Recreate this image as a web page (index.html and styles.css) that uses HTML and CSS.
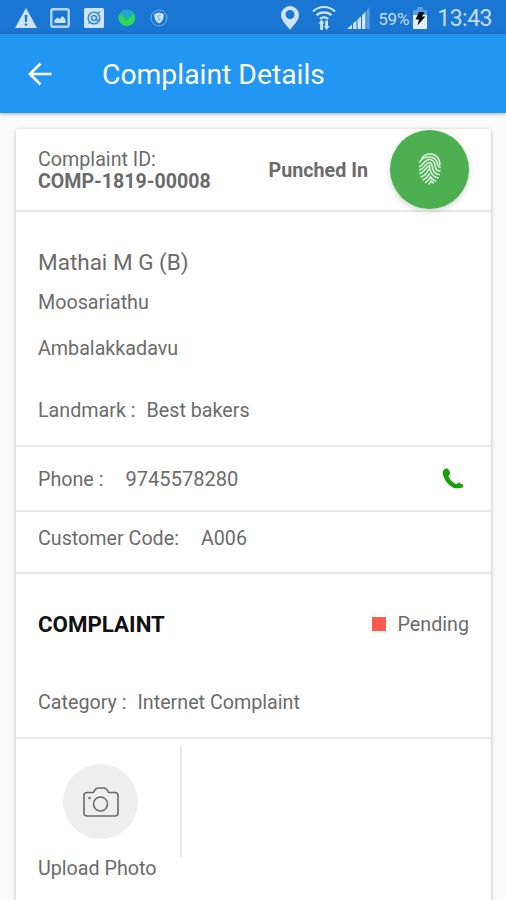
FILE: index.html
```html
<!DOCTYPE html>
<html lang="en">
<head>
    <meta charset="utf-8">
    <meta content="width=device-width,initial-scale=1.0" name="viewport">
    <title>Complaint Details</title>
    <link rel="stylesheet" href="styles.css">
</head>
<body>
<!-- status bar -->
<div class="status-bar">
    <div class="status-left">
        <svg width="24" height="22" viewBox="0 0 24 22"><path fill="#cfe4fb" d="M12 1L23 21H1z"/><path fill="#1976d2" d="M10.600 8h2.800l-.4 7h-2zM10.800 16.500h2.400v2.300h-2.400z"/></svg>
        <svg width="20" height="20" viewBox="0 0 20 20"><rect x="1.300" y="1.300" width="17.400" height="17.400" rx="1.500" fill="none" stroke="#b5d5f7" stroke-width="2.400"/><path fill="#cfe4fb" d="M4.500 15v-3l3-2.500 2 1.500 3-3 3 3.500V15z"/></svg>
        <svg width="20" height="20" viewBox="0 0 20 20"><rect width="20" height="20" rx="1.500" fill="#cfe4fb"/><g fill="none" stroke="#3b8fb5" stroke-width="1.500"><circle cx="10" cy="10" r="5.800"/><circle cx="10" cy="10" r="2.500"/><path d="M12.500 8v3c0 2 3 1.500 3.300-.5M4.500 15.500l2-1.500M14 5l2-1.500"/></g></svg>
        <svg width="18" height="18" viewBox="0 0 18 18"><circle cx="9" cy="9" r="8.500" fill="#22b58c"/><path fill="#1da5d8" d="M3 3c3-3 9-3 12 0l-5 6-4-2z"/><path fill="#2fd85c" d="M1 6l4 1 3 5 8-7c2 3 1 8-3 10.500-3 2-8 1.500-10-1.500C1 12 0 9 1 6z"/></svg>
        <svg width="18" height="18" viewBox="0 0 18 18"><circle cx="9" cy="9" r="8" fill="none" stroke="#6caeee"/><path fill="#cfe4fb" d="M9 3.500l4.700 1.400c.2 4-1 7.500-4.700 9.600-3.700-2.100-4.900-5.600-4.700-9.600z"/><path fill="none" stroke="#5a9fe5" d="M10.500 6.500c-3-.6-3 2-1.500 2.300s1.500 2.600-1.200 2.200"/></svg>
    </div>
    <div class="status-right">
        <svg width="18" height="24" viewBox="0 0 18 24"><path fill="#cfe4fb" fill-rule="evenodd" d="M9 0a9 9 0 0 0-9 9c0 6 6 10 9 15 3-5 9-9 9-15a9 9 0 0 0-9-9zm0 4a4.500 4.500 0 1 1 0 9 4.500 4.500 0 0 1 0-9z"/></svg>
        <svg class="wifi" width="24" height="26" viewBox="0 0 24 26"><g fill="none" stroke="#cfe4fb" stroke-width="2.200"><path d="M1 6.500c6-6 16-6 22 0M4.500 10.300c4-4 11-4 15 0M8 14c2-2.200 6-2.200 8 0"/></g><path fill="#cfe4fb" d="M9.500 14.500l3 4H11V25H8.200v-6.500H6.500zM13.300 15.500H16V21h1.700l-3 4-3-4h1.600z"/></svg>
        <svg class="signal" width="23" height="22" viewBox="0 0 23 22"><path fill="#cfe4fb" d="M0 22l5-4.500V22zM6 16.500l3.500-3V22H6zM10.500 12.500l3.500-3.300V22h-3.500zM15 8.200l3.500-3.400V22H15z"/><path fill="#5a9fe5" d="M19.500 4L22.500 0v22h-3z"/></svg>
        <span class="percent">59%</span>
        <svg class="battery" width="14" height="22" viewBox="0 0 14 22"><path fill="#5a9fe5" d="M4 0h6v3h4v6H0V3h4z"/><path fill="#e4f0fc" d="M0 8h14v14H0z"/><path fill="#111" d="M6 5h5.500L9 9.500h3.500l-8 9 1.500-6H2.500z"/></svg>
        <span class="clock">13:43</span>
    </div>
</div>
<!-- header -->
<header class="app-bar">
    <svg class="back" width="24" height="24" viewBox="0 0 24 24"><path fill="none" stroke="#fff" stroke-width="2.700" d="M23.500 12H2.500M12.500 1.500L2 12l10.500 10.500"/></svg>
    <h1>Complaint Details</h1>
</header>
<div class="card">
    <div class="row card-head">
        <div class="complaint-id">
            <p>Complaint ID:</p>
            <p class="bold id-value">COMP-1819-00008</p>
        </div>
        <p class="bold punched">Punched In</p>
        <div class="punch-btn">
            <svg width="24" height="32" viewBox="0 0 24 32"><g fill="none" stroke="#e3f5e3" stroke-width="1.500" stroke-linecap="round">
                <path d="M4 5C8-.3 16-.3 20 5c1.500 2 2 4 2 7"/>
                <path d="M1.500 9.500C5 3 15 2 18.500 8c1.500 3 .5 5.500 3.500 6.500"/>
                <path d="M1.500 13.500C6 12 6 6.500 11.500 6.500S17 12 17.500 14.500s2 3.500 4.500 3.500"/>
                <path d="M1.500 17C7 15.500 7 9.500 11.500 9.500c3 0 2.500 4 3.500 7s3 5 6.500 5"/>
                <path d="M2 20.500C8 18.500 8 13 11.500 12.500c0 6 3 11 8.500 12.500"/>
                <path d="M3 24c4-1.500 6.500-4.500 7.500-7.500M5 27c3-1.500 5-3.500 6.500-6M7.500 29.500c2-1.300 4-3 5-5.500 1.300 2 3 3.200 5 4M11 31c1-.8 1.700-1.800 2.200-3 .8 1 1.500 1.500 2.300 2"/>
            </g></svg>
        </div>
    </div>
    <div class="row address">
        <p class="name">Mathai M G (B)</p>
        <p class="line1">Moosariathu</p>
        <p class="line2">Ambalakkadavu</p>
        <p class="pair landmark"><span>Landmark :</span><span>Best bakers</span></p>
    </div>
    <div class="row phone">
        <p class="pair wide"><span>Phone :</span><span class="digits">9745578280</span></p>
        <svg width="22" height="21" viewBox="0 0 22 21"><path fill="#16a005" d="M5 .5C3 0 .8 2 .700 4.500.800 11 8 19.500 13 20.200c3 .3 8 .2 8.300-1.900.2-2-1.600-2.500-3-2.600-.3-1.500-2.500-1.500-3.200 0-1 .6-2 .3-2.800-.4C10 13.500 7.500 11 6.500 8.500c-.2-1 1.500-1.500 1.500-3C8 3.500 6.500.7 5 .5z"/></svg>
    </div>
    <div class="row customer">
        <p class="pair wide"><span>Customer Code:</span><span>A006</span></p>
    </div>
    <div class="row complaint">
        <div class="complaint-top">
            <h2>COMPLAINT</h2>
            <p class="state"><i class="dot"></i><span>Pending</span></p>
        </div>
        <p class="pair category"><span>Category :</span><span>Internet Complaint</span></p>
    </div>
    <div class="uploads">
        <div class="upload">
            <div class="upload-icon">
                <svg width="36" height="30" viewBox="0 0 36 30"><g fill="none" stroke="#6a6a6a" stroke-width="1.600"><path d="M4 5.500h6.500C12 2.500 12.500 1 15 1h6c2.500 0 3 1.500 4.500 4.500H32a3 3 0 0 1 3 3V26a3 3 0 0 1-3 3H4a3 3 0 0 1-3-3V8.500a3 3 0 0 1 3-3z"/><circle cx="17.500" cy="17" r="7"/></g><circle cx="6.500" cy="11" r="1.200" fill="#6a6a6a"/></svg>
            </div>
            <p>Upload Photo</p>
        </div>
    </div>
</div>
</body>
</html>
```
FILE: styles.css
```css
body,p,h1,h2{margin: 0;}
body{
	height: 900px;
	overflow: hidden;
	background: #fafafa;
	color: #6b6b6b;
	font: 19.700px/24px Roboto, sans-serif;
}
svg{
	display: block;
	flex: none;
}
.status-bar{
	display: flex;
	justify-content: space-between;
	box-sizing: border-box;
	height: 34px;
	padding: 0 14px;
	background: #1976d2;
	color: #c3ddf8;
}
.status-left,.status-right{
	display: flex;
	align-items: center;
	padding-top: 2px;
}
.status-left{gap: 14px;}
.status-left svg:nth-child(1){margin-right: -2px;}
.wifi{margin-left: 13px;}
.signal{margin-left: 11px;}
.percent{
	margin-left: 8px;
	padding-top: 1px;
	font-size: 17px;
	letter-spacing: -.2px;
}
.battery{margin-left: 4px;}
.clock{
	margin-left: 10px;
	padding-top: 2px;
	font-size: 23px;
	letter-spacing: -.5px;
}
.app-bar{
	display: flex;
	align-items: center;
	height: 79px;
	padding: 0 28px;
	background: #2196f3;
	box-shadow: 0 1px 4px rgba(0,0,0,.3);
}
.app-bar h1{
	margin: 2px 0 0 50px;
	color: #fff;
	font-size: 28.300px;
	font-weight: 400;
}
.card{
	box-sizing: border-box;
	height: 790px;
	margin: 16px 15px 0 16px;
	background: #fff;
	border-radius: 2px;
	box-shadow: 0 1px 4px rgba(0,0,0,.25);
}
.row{
	box-sizing: border-box;
	padding: 0 22px;
	border-bottom: 2px solid #e8e8e8;
}
.bold{font-weight: 700;}
.card-head{
	display: flex;
	align-items: center;
	height: 83px;
}
.complaint-id{
	flex: 1;
	line-height: 22px;
	padding-top: 3px;
}
.id-value{font-size: 19.600px;}
.punched{
	margin-right: 22px;
	padding-top: 2px;
}
.punch-btn{
	display: flex;
	align-items: center;
	justify-content: center;
	width: 79px;
	height: 79px;
	margin-bottom: 1px;
	border-radius: 50%;
	background: #4caf50;
	box-shadow: 0 2px 6px rgba(0,0,0,.18);
}
.address{
	height: 235px;
	padding-top: 38px;
}
.name{font-size: 22.500px;}
.line1{margin-top: 17px;}
.line2{margin-top: 22px;}
.landmark{margin-top: 38px;}
.pair{
	display: flex;
	gap: 11px;
}
.wide{gap: 22px;}
.phone{
	display: flex;
	align-items: center;
	justify-content: space-between;
	height: 65px;
	padding-right: 27px;
}
.phone .pair{
	align-items: baseline;
	padding-top: 1px;
}
.digits{font-size: 20.100px;}
.customer{
	height: 62px;
	padding-top: 15px;
}
.complaint{
	height: 165px;
	padding-top: 39px;
}
.complaint-top{
	display: flex;
	align-items: center;
	justify-content: space-between;
}
.complaint h2{
	margin-bottom: 2px;
	color: #111;
	font-size: 22.300px;
	font-weight: 700;
	line-height: 22px;
}
.state{
	display: flex;
	align-items: center;
	gap: 12px;
}
.dot{
	width: 14px;
	height: 14px;
	margin-bottom: 2px;
	background: #ff5a4d;
}
.category{margin-top: 54px;}
.uploads{
	display: flex;
	padding: 6px 22px;
}
.upload{
	width: 142px;
	height: 112px;
	border-right: 2px solid #e8e8e8;
}
.upload-icon{
	display: flex;
	align-items: center;
	justify-content: center;
	width: 75px;
	height: 75px;
	margin: 19px 0 0 25px;
	border-radius: 50%;
	background: #eee;
}
.upload p{margin-top: 18px;}
```
